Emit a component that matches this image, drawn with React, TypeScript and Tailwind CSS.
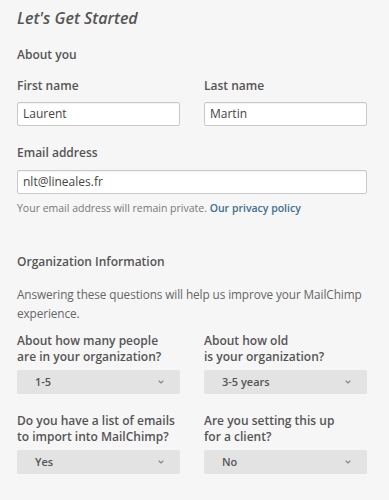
import { ChevronDown } from 'lucide-react';

const font = { fontFamily: '"Open Sans", "Noto Sans", sans-serif' };

const Label = ({ children, className = '' }: { children: React.ReactNode; className?: string }) => (
  <div className={`text-[12px] leading-[18px] font-semibold text-[#555] ${className}`}>{children}</div>
);

const TextInput = ({ value }: { value: string }) => (
  <div className="h-[24px] border border-[#c9c9c9] bg-white rounded-[2px] px-[5px] flex items-center text-[12px] text-[#444] shadow-[inset_0_1px_1px_rgba(0,0,0,0.05)]">
    {value}
  </div>
);

const Select = ({ value }: { value: string }) => (
  <div className="h-[24px] bg-[#e3e3e3] rounded-[2px] pl-[18px] pr-[15px] flex items-center justify-between text-[11px] font-semibold text-[#555]">
    <span>{value}</span>
    <ChevronDown size={8} strokeWidth={3.5} className="text-[#888]" />
  </div>
);

const Question = ({ lines, value }: { lines: [string, string]; value: string }) => (
  <div className="flex flex-col">
    <div className="text-[12px] leading-[16px] font-semibold text-[#555]">
      <div>{lines[0]}</div>
      <div>{lines[1]}</div>
    </div>
    <div className="mt-[5px]">
      <Select value={value} />
    </div>
  </div>
);

export default function App() {
  return (
    <div style={font} className="w-[389px] h-[500px] bg-[#f6f6f6] overflow-hidden">
      <div className="pl-[17px] pr-[22px] pt-[6px]">
        <h1 className="text-[16px] leading-[24px] italic font-semibold text-[#555]">Let's Get Started</h1>

        <Label className="mt-[16px]">About you</Label>

        <div className="mt-[13px] grid grid-cols-2 gap-x-[24px]">
          <div>
            <Label>First name</Label>
            <div className="mt-[7px]">
              <TextInput value="Laurent" />
            </div>
          </div>
          <div>
            <Label>Last name</Label>
            <div className="mt-[7px]">
              <TextInput value="Martin" />
            </div>
          </div>
        </div>

        <Label className="mt-[18px]">Email address</Label>
        <div className="mt-[8px]">
          <TextInput value="nlt@lineales.fr" />
        </div>
        <p className="mt-[6px] text-[10.5px] leading-[16px] text-[#777]">
          Your email address will remain private.{' '}
          <a className="text-[#3f6f92] font-semibold">Our privacy policy</a>
        </p>

        <Label className="mt-[37px]">Organization Information</Label>
        <p className="mt-[14px] text-[11.8px] leading-[19px] tracking-[-0.1px] text-[#666]">
          Answering these questions will help us improve your MailChimp experience.
        </p>

        <div className="mt-[10px] grid grid-cols-2 gap-x-[24px]">
          <Question lines={['About how many people', 'are in your organization?']} value="1-5" />
          <Question lines={['About how old', 'is your organization?']} value="3-5 years" />
        </div>

        <div className="mt-[19px] grid grid-cols-2 gap-x-[24px]">
          <Question lines={['Do you have a list of emails', 'to import into MailChimp?']} value="Yes" />
          <Question lines={['Are you setting this up', 'for a client?']} value="No" />
        </div>
      </div>
    </div>
  );
}
